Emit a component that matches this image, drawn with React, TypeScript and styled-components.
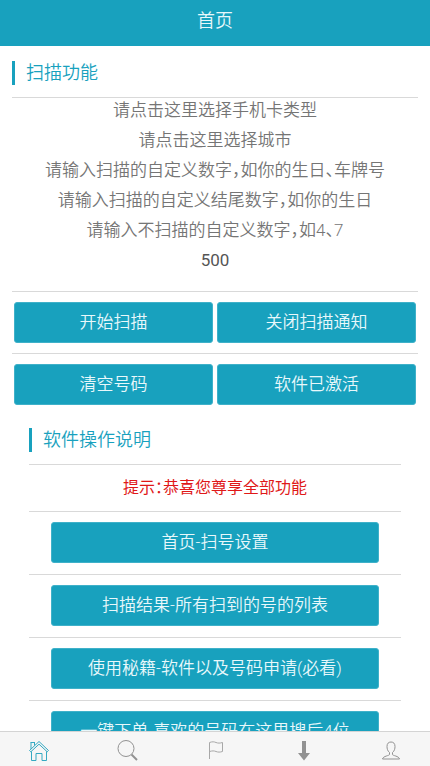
import React from 'react';
import styled, { createGlobalStyle } from 'styled-components';

const teal = '#18a1be';

const GlobalStyle = createGlobalStyle`
  * { box-sizing: border-box; }
  body {
    margin: 0;
    background: #fff;
    font-family: Roboto, 'Noto Sans CJK SC', sans-serif;
    font-size: 17px;
    font-weight: 350;
    font-feature-settings: 'halt';
  }
  button, input, select {
    font: inherit;
    font-feature-settings: inherit;
  }
`;

const Page = styled.div`
  display: flex;
  flex-direction: column;
  height: 100vh;
`;

const Header = styled.header`
  flex: none;
  display: flex;
  align-items: center;
  justify-content: center;
  height: 46px;
  padding-bottom: 4px;
  background: ${teal};
`;

const Title = styled.h1`
  margin: 0;
  color: #e8f8fb;
  font-size: 18px;
  font-weight: 350;
  line-height: 24px;
`;

const Content = styled.main`
  flex: 1;
  min-height: 0;
  overflow-y: auto;
  scrollbar-width: none;
  padding: 15px 12px;
`;

const Section = styled.section<{ $inset?: boolean }>`
  padding: 0 ${p => (p.$inset ? 17 : 0)}px;
  margin-top: ${p => (p.$inset ? 13 : 0)}px;
`;

const Heading = styled.h2`
  margin: 0 0 12px;
  padding-left: 11px;
  border-left: 3px solid ${teal};
  color: ${teal};
  font-size: 18px;
  font-weight: 350;
  line-height: 24px;
`;

const Divided = styled.div`
  border-top: 1px solid #d9d9d9;
`;

const Fields = styled(Divided)`
  display: flex;
  flex-direction: column;
  padding: 0 0 13px;
`;

const fieldStyle = `
  width: 100%;
  height: 30px;
  padding: 0 0 6px;
  border: 0;
  outline: 0;
  background: transparent;
  text-align: center;
`;

const Picker = styled.select`
  ${fieldStyle}
  appearance: none;
  text-align-last: center;
  color: #757575;
  line-height: 24px;
`;

const Field = styled.input`
  ${fieldStyle}
  color: #555;
  font-weight: 400;
  &::placeholder {
    color: #757575;
    font-weight: 350;
    opacity: 1;
  }
`;

const ButtonRow = styled(Divided)`
  display: flex;
  gap: 4px;
  padding: 10px 2px;
`;

const GuideRow = styled(Divided)`
  display: flex;
  padding: 10px 22px 11px;
`;

const ActionButton = styled.button`
  flex: 1 1 0;
  height: 41px;
  padding: 0 0 4px;
  border: 1px solid #3fb1c9;
  border-radius: 3px;
  background: ${teal};
  color: #e8f8fb;
  white-space: nowrap;
`;

const Notice = styled(Divided)`
  padding: 11px 0;
  color: #e01818;
  font-size: 16px;
  font-weight: 400;
  line-height: 24px;
  text-align: center;
`;

const TabBar = styled.nav`
  flex: none;
  display: flex;
  justify-content: space-between;
  padding: 7px 28px 5px;
  border-top: 1px solid #d4d4d4;
  background: #f6f6f6;
`;

const Tab = styled.a<{ $active?: boolean }>`
  display: flex;
  color: ${p => (p.$active ? '#35a9c2' : '#929292')};
`;

const Icon = ({ children }: { children: React.ReactNode }) => (
  <svg width="22" height="22" viewBox="0 0 22 22" fill="none" stroke="currentColor" strokeWidth="1" aria-hidden="true">
    {children}
  </svg>
);

const guides = [
  '首页-扫号设置',
  '扫描结果-所有扫到的号的列表',
  '使用秘籍-软件以及号码申请(必看)',
  '一键下单-喜欢的号码在这里搜后4位',
];

const fields = [
  { label: '自定义数字', placeholder: '请输入扫描的自定义数字，如你的生日、车牌号' },
  { label: '自定义结尾数字', placeholder: '请输入扫描的自定义结尾数字，如你的生日' },
  { label: '不扫描的数字', placeholder: '请输入不扫描的自定义数字，如4、7' },
  { label: '扫描数量', value: '500' },
];

const tabs = [
  {
    label: '首页',
    icon: (
      <>
        <path d="M1.500 11.500 11 2.500l9.500 9-1.300 1.300L11 5.200l-8.200 7.600z" />
        <path d="M3.500 12.500V21.500h4.500v-7h6v7h4.500v-9M3 10V3.500h3.500v3M2.500 3.500h4.500" />
      </>
    ),
  },
  {
    label: '搜索',
    icon: (
      <>
        <circle cx="10" cy="9.500" r="8" />
        <path d="M15.500 15.500 21 21" strokeWidth="2" />
      </>
    ),
  },
  {
    label: '标记',
    icon: <path d="M5.500 20V3.500c3-1 4.500-.8 6.500 0s4 .8 6.500 0v9c-2.500.8-4.500.8-6.500 0s-3.500-.8-6.500 0" stroke="#a8a8a8" />,
  },
  {
    label: '下载',
    icon: <path d="M10 2h4v12h4l-6 7.500L6 14h4z" fill="currentColor" stroke="none" />,
  },
  {
    label: '我的',
    icon: (
      <path
        d="M9.500 13.500C7.500 12 7 9.500 7 7.500c0-3 1.500-4.500 4-4.500s4 1.500 4 4.500c0 2-.5 4.500-2.500 6v2c0 1.200 6.500 1.500 7 4.500h-17c.5-3 7-3.300 7-4.500z"
      />
    ),
  },
];

export default function App() {
  return (
    <Page>
      <GlobalStyle />
      <Header>
        <Title>首页</Title>
      </Header>
      <Content>
        <Section>
          <Heading>扫描功能</Heading>
          <Fields>
            <Picker aria-label="手机卡类型">
              <option>请点击这里选择手机卡类型</option>
            </Picker>
            <Picker aria-label="城市">
              <option>请点击这里选择城市</option>
            </Picker>
            {fields.map(f => (
              <Field key={f.label} aria-label={f.label} placeholder={f.placeholder} defaultValue={f.value} />
            ))}
          </Fields>
          <ButtonRow>
            <ActionButton>开始扫描</ActionButton>
            <ActionButton>关闭扫描通知</ActionButton>
          </ButtonRow>
          <ButtonRow>
            <ActionButton>清空号码</ActionButton>
            <ActionButton>软件已激活</ActionButton>
          </ButtonRow>
        </Section>
        <Section $inset>
          <Heading>软件操作说明</Heading>
          <Notice>提示：恭喜您尊享全部功能</Notice>
          {guides.map(g => (
            <GuideRow key={g}>
              <ActionButton>{g}</ActionButton>
            </GuideRow>
          ))}
        </Section>
      </Content>
      <TabBar>
        {tabs.map((t, i) => (
          <Tab key={t.label} href="#" aria-label={t.label} $active={i === 0}>
            <Icon>{t.icon}</Icon>
          </Tab>
        ))}
      </TabBar>
    </Page>
  );
}
